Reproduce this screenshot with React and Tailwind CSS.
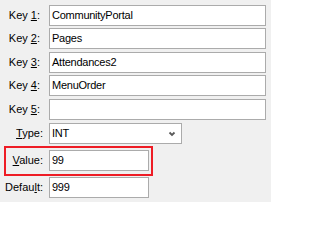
import React from "react";

function Label({ pre, u, post, pr }) {
  return (
    <div className={`w-[49px] shrink-0 text-right ${pr}`}>
      {pre}
      <span className="underline underline-offset-[1px]">{u}</span>
      {post}
    </div>
  );
}

function Input({ value, w }) {
  return (
    <div className={`${w} h-[21px] bg-white border border-[#ababab] flex items-center pl-[2px] text-black tracking-[-0.25px]`}>
      {value}
    </div>
  );
}

export default function App() {
  const keys = [
    ["1", "CommunityPortal"],
    ["2", "Pages"],
    ["3", "Attendances2"],
    ["4", "MenuOrder"],
    ["5", ""],
  ];
  const mts = ["mt-[5px]", "mt-[2px]", "mt-[3px]", "mt-[2px]", "mt-[3px]"];
  return (
    <div
      className="w-[271px] h-[202px] bg-[#f0f0f0] text-[11px] leading-[13px] text-black flex flex-col overflow-hidden"
      style={{ fontFamily: '"Liberation Sans", Arial, sans-serif' }}
    >
      {keys.map(([n, v], i) => (
        <div key={n} className={`flex items-center ${mts[i]}`}>
          <Label pre="Key " u={n} post=":" pr="pr-[9px]" />
          <Input value={v} w="w-[217px]" />
        </div>
      ))}
      <div className="flex items-center mt-[3px]">
        <Label pre="" u="T" post="ype:" pr="pr-[6px]" />
        <div className="w-[133px] h-[21px] bg-white border border-[#ababab] flex items-center pl-[2px] pr-[5px] justify-between tracking-[-0.25px]">
          <span>INT</span>
          <svg width="8" height="6" viewBox="0 0 8 6">
            <path d="M1.5 1.5 L4 4 L6.5 1.5" stroke="#5a5a5a" strokeWidth="1.8" fill="none" />
          </svg>
        </div>
      </div>
      <div className="ml-[4px] mt-[2px] w-[149px] border-2 border-[#ee1c25] pt-[2px] pb-[3px] flex items-center">
        <div className="w-[43px] shrink-0 text-right pr-[6px]">
          <span className="underline underline-offset-[1px]">V</span>alue:
        </div>
        <Input value="99" w="w-[100px]" />
      </div>
      <div className="flex items-center mt-[1px]">
        <Label pre="Defau" u="l" post="t:" pr="pr-[6px]" />
        <Input value="999" w="w-[100px]" />
      </div>
    </div>
  );
}
